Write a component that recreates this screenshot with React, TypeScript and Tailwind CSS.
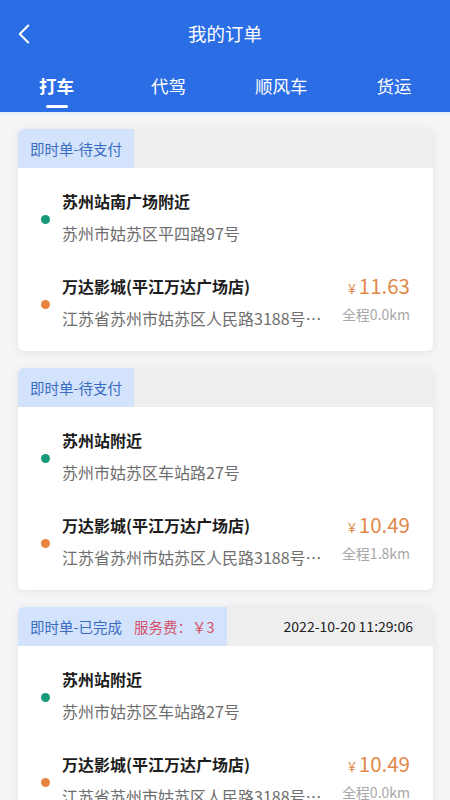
import { ChevronLeft } from "lucide-react"

type Order = {
  status: string
  fee?: string
  time?: string
  from: { title: string; addr: string }
  to: { title: string; addr: string }
  price: string
  distance: string
}

const orders: Order[] = [
  {
    status: "即时单-待支付",
    from: { title: "苏州站南广场附近", addr: "苏州市姑苏区平四路97号" },
    to: { title: "万达影城(平江万达广场店)", addr: "江苏省苏州市姑苏区人民路3188号…" },
    price: "11.63",
    distance: "全程0.0km",
  },
  {
    status: "即时单-待支付",
    from: { title: "苏州站附近", addr: "苏州市姑苏区车站路27号" },
    to: { title: "万达影城(平江万达广场店)", addr: "江苏省苏州市姑苏区人民路3188号…" },
    price: "10.49",
    distance: "全程1.8km",
  },
  {
    status: "即时单-已完成",
    fee: "服务费：￥3",
    time: "2022-10-20 11:29:06",
    from: { title: "苏州站附近", addr: "苏州市姑苏区车站路27号" },
    to: { title: "万达影城(平江万达广场店)", addr: "江苏省苏州市姑苏区人民路3188号…" },
    price: "10.49",
    distance: "全程0.0km",
  },
]

const tabs = ["打车", "代驾", "顺风车", "货运"]

function OrderCard({ order }: { order: Order }) {
  return (
    <div className="mx-[18px] mr-[17px] mb-[17px] rounded-md bg-white shadow-[0_1px_8px_rgba(0,0,0,0.08)] overflow-hidden">
      {/* 状态栏 */}
      <div className="flex h-[39px] items-stretch bg-[#eeeeef]">
        <div className="flex items-center gap-3 bg-[#d3e3fb] px-3 text-[14.5px]">
          <span className="text-[#3a6cc0]">{order.status}</span>
          {order.fee && <span className="text-[#d5526a]">{order.fee}</span>}
        </div>
        {order.time && (
          <div className="ml-auto flex items-center pr-[20px] text-[14px] text-[#222]">{order.time}</div>
        )}
      </div>

      {/* 行程 */}
      <div className="pt-[21px] pb-[21px] pl-[23px] pr-[23px]">
        <div className="flex items-center">
          <div className="h-[9px] w-[9px] shrink-0 rounded-full bg-[#17997a] mt-[4px]" />
          <div className="ml-[12px] min-w-0 flex-1">
            <div className="text-[16px] leading-[24px] font-bold text-[#1c1c1c]">{order.from.title}</div>
            <div className="mt-[8px] whitespace-nowrap text-[16px] leading-[24px] text-[#6e6e6e]">{order.from.addr}</div>
          </div>
        </div>
        <div className="mt-[29px] flex items-center">
          <div className="h-[9px] w-[9px] shrink-0 rounded-full bg-[#e8843f] mt-[4px]" />
          <div className="ml-[12px] min-w-0 flex-1">
            <div className="text-[16px] leading-[24px] font-bold text-[#1c1c1c]">{order.to.title}</div>
            <div className="mt-[8px] whitespace-nowrap text-[16px] leading-[24px] text-[#6e6e6e]">{order.to.addr}</div>
          </div>
          <div className="flex shrink-0 flex-col items-end self-start">
            <div className="text-[#e2894a] leading-[28px] -mt-[3px]">
              <span className="text-[14px] mr-[3px]">¥</span>
              <span className="text-[20.5px]">{order.price}</span>
            </div>
            <div className="mt-[2px] text-[14px] leading-[20px] text-[#a8a8a8]">{order.distance}</div>
          </div>
        </div>
      </div>
    </div>
  )
}

export default function App() {
  return (
    <div className="h-[800px] w-[450px] overflow-hidden bg-[#f5f5f7] font-['Noto_Sans_CJK_SC','Noto_Sans',sans-serif]">
      {/* ヘッダー */}
      <div className="bg-[#2b6de5] text-white">
        <div className="grid h-[68px] grid-cols-[60px_1fr_60px] items-center">
          <ChevronLeft className="ml-[7px] h-[34px] w-[34px]" strokeWidth={1.4} />
          <div className="text-center text-[18.5px]">我的订单</div>
          <div />
        </div>
        <div className="flex h-[44px] pl-[39px]">
          {tabs.map((tab, i) => (
            <div
              key={tab}
              className={`flex flex-col items-center pt-[7px] ${i === 1 ? "ml-[77px]" : i > 1 ? "ml-[69px]" : ""}`}
            >
              <span className={`text-[17.5px] leading-[22px] ${i === 0 ? "font-bold" : ""}`}>{tab}</span>
              {i === 0 && <div className="mt-[8px] h-[3px] w-[22px] rounded-full bg-white" />}
            </div>
          ))}
        </div>
      </div>
      <div className="h-[3px] bg-[#e8effb]" />

      <div className="pt-[14px]">
        {orders.map((order, i) => (
          <OrderCard key={i} order={order} />
        ))}
      </div>
    </div>
  )
}
